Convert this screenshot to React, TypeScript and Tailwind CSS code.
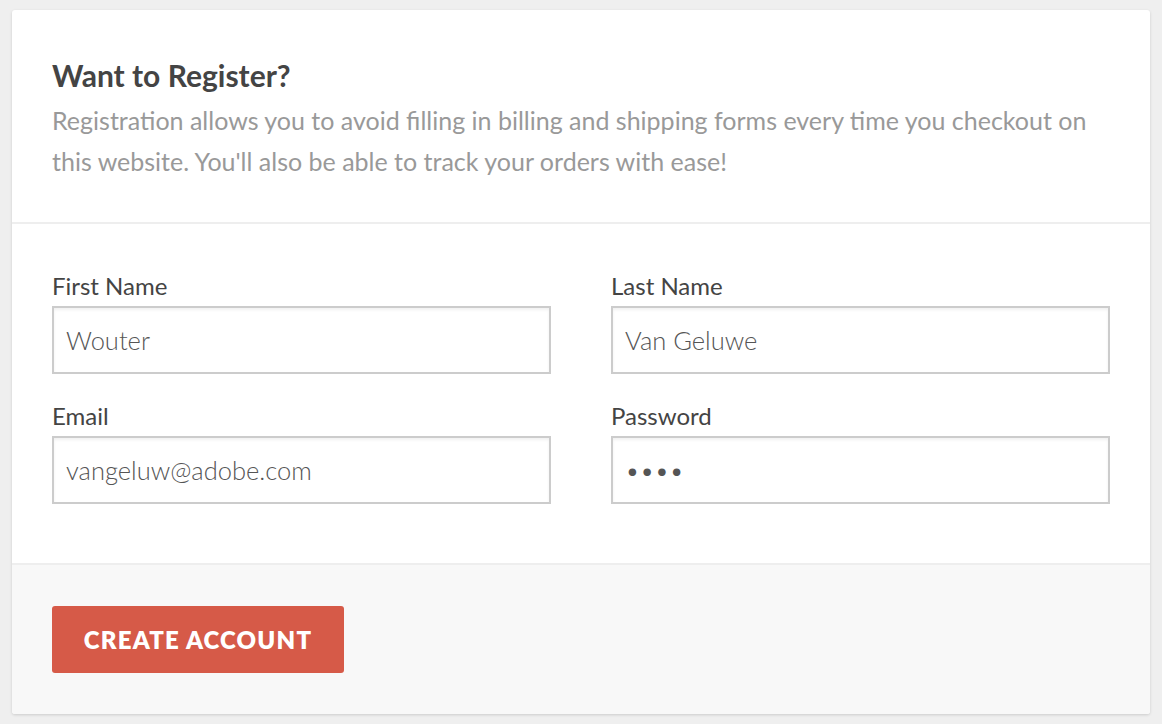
export default function App() {
  return (
    <div className="min-h-screen bg-[#efefef] px-3 pt-[10px] pb-[10px] font-['Lato',sans-serif]">
      <div className="overflow-hidden rounded-[3px] bg-white shadow-[0_1px_3px_rgba(0,0,0,0.15)]">
        {/* Intro */}
        <div className="border-b-2 border-[#eeeeee] px-10 pt-10 pb-[40px]">
          <h2 className="text-[30px] font-bold leading-[50px] text-[#444444]">Want to Register?</h2>
          <p className="text-[25px] leading-[41px] text-[#999999]">
            Registration allows you to avoid filling in billing and shipping forms every time you checkout on
            this website. You'll also be able to track your orders with ease!
          </p>
        </div>

        {/* Fields */}
        <form className="grid grid-cols-2 gap-x-[60px] gap-y-[26px] border-b-2 border-[#eeeeee] px-10 pt-[46px] pb-[59px]">
          <Field label="First Name" value="Wouter" />
          <Field label="Last Name" value="Van Geluwe" />
          <Field label="Email" value="vangeluw@adobe.com" type="email" />
          <Field label="Password" value="••••" type="password" />
        </form>

        {/* Actions */}
        <div className="bg-[#f8f8f8] px-10 pt-[41px] pb-[41px]">
          <button className="h-[67px] w-[292px] rounded-[3px] bg-[#d65a48] text-[24px] font-extrabold uppercase tracking-[0.05em] text-white">
            Create Account
          </button>
        </div>
      </div>
    </div>
  );
}

function Field({ label, value, type = 'text' }: { label: string; value: string; type?: string }) {
  return (
    <label className="flex flex-col">
      <span className="text-[24px] leading-[32px] text-[#444444]">{label}</span>
      <input
        type={type}
        defaultValue={value}
        className="mt-[4px] h-[68px] w-full border-2 border-[#cccccc] bg-white px-[12px] text-[25.5px] font-light text-[#555555] shadow-[inset_0_2px_3px_rgba(0,0,0,0.06)] outline-none"
      />
    </label>
  );
}
